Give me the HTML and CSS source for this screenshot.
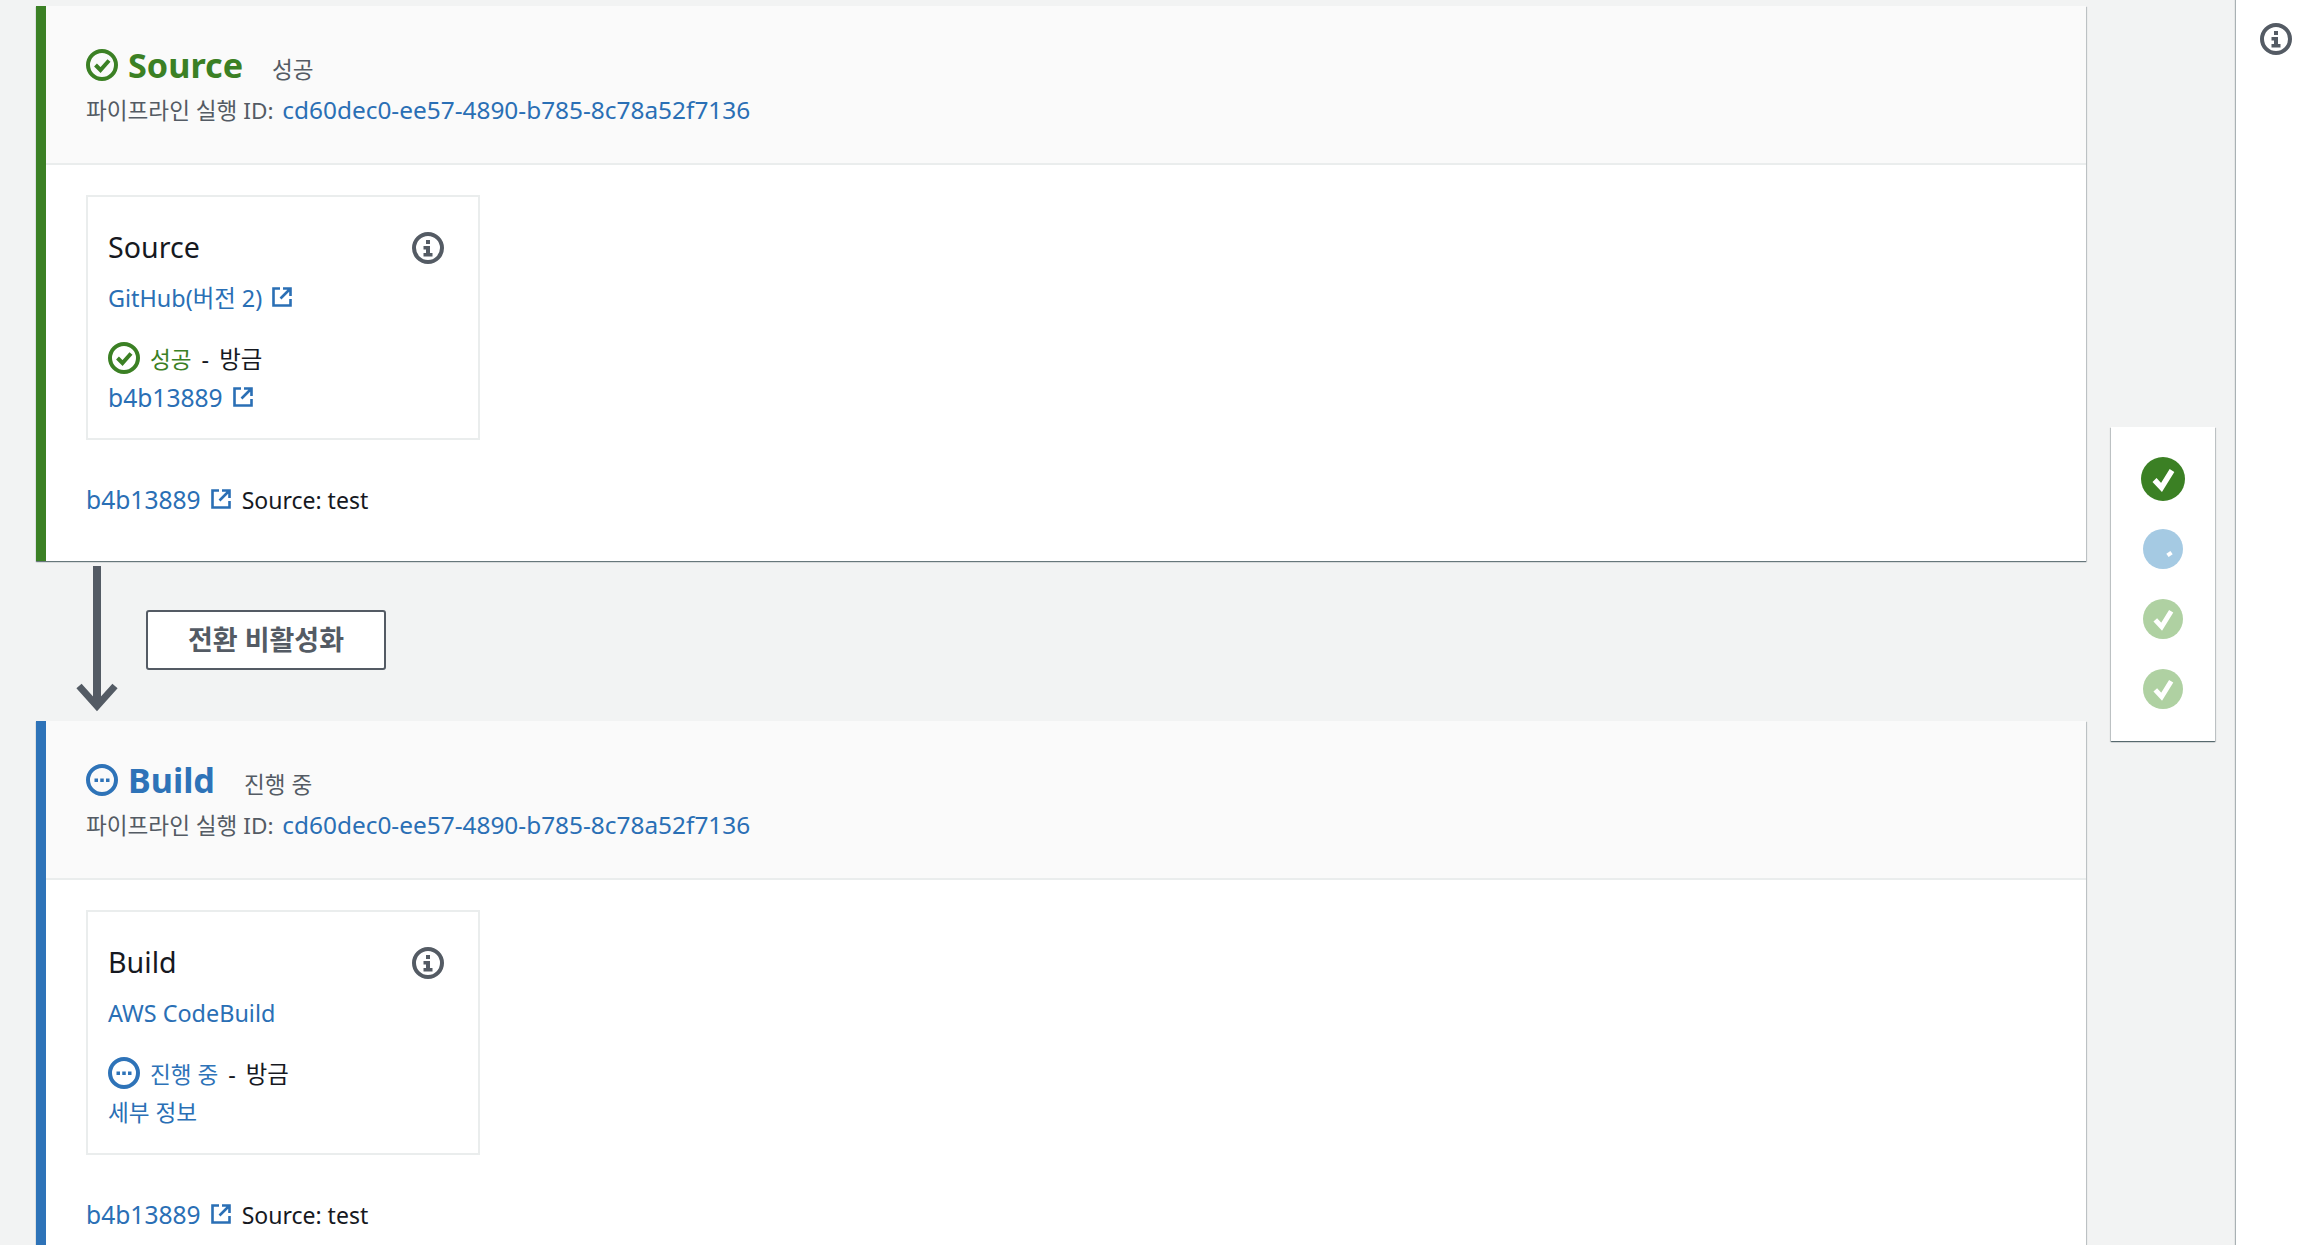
FILE: index.html
```html
<!DOCTYPE html>
<html lang="ko">
<head>
    <meta charset="UTF-8">
    <title>CodePipeline</title>
    <link rel="stylesheet" href="styles.css">
</head>
<body>
    <svg class="defs" width="0" height="0">
        <symbol id="i-ok" viewBox="0 0 32 32">
            <circle cx="16" cy="16" r="14" fill="none" stroke="currentColor" stroke-width="4"/>
            <path d="M9.500 16l5 5 8.500-9.500" fill="none" stroke="currentColor" stroke-width="4"/>
        </symbol>
        <symbol id="i-progress" viewBox="0 0 32 32">
            <circle cx="16" cy="16" r="14" fill="none" stroke="currentColor" stroke-width="4"/>
            <path d="M8.500 14.500h3.500v3.500h-3.500zM14.250 14.500h3.500v3.500h-3.500zM20 14.500h3.500v3.500h-3.500z" fill="currentColor"/>
        </symbol>
        <symbol id="i-info" viewBox="0 0 32 32">
            <circle cx="16" cy="16" r="14" fill="none" stroke="currentColor" stroke-width="4"/>
            <path d="M14 8h4v4h-4zM11.500 14h6.500v7h2.500v3.500h-9V21H14v-3.500h-2.500z" fill="currentColor"/>
        </symbol>
        <symbol id="i-ext" viewBox="0 0 20 20">
            <path d="M8 1.500H1.500v17h17V12M11 1.500h7.500V9M18 2L8.500 11.500" fill="none" stroke="currentColor" stroke-width="2.600"/>
        </symbol>
        <symbol id="i-check" viewBox="0 0 44 44">
            <path d="M13.500 23l7 7.500L31 13.500" fill="none" stroke="#fff" stroke-width="5.500"/>
        </symbol>
    </svg>

    <div class="page">
        <main class="pipeline">
            <section class="stage stage-ok">
                <header class="stage-head">
                    <div class="stage-title">
                        <svg class="stage-icon"><use href="#i-ok"/></svg>
                        <h2>Source</h2>
                        <span class="stage-state">성공</span>
                    </div>
                    <p class="exec-id">파이프라인 실행 ID: <a href="#">cd60dec0-ee57-4890-b785-8c78a52f7136</a></p>
                </header>
                <div class="stage-body">
                    <div class="action">
                        <div class="action-top">
                            <h3>Source</h3>
                            <svg class="info-icon"><use href="#i-info"/></svg>
                        </div>
                        <a class="provider" href="#">GitHub(버전 2)<svg class="ext"><use href="#i-ext"/></svg></a>
                        <div class="action-status">
                            <svg class="status-icon ok"><use href="#i-ok"/></svg>
                            <span class="ok">성공</span>
                            <span class="when">- 방금</span>
                        </div>
                        <a class="detail detail-rev" href="#">b4b13889<svg class="ext"><use href="#i-ext"/></svg></a>
                    </div>
                    <p class="revision"><a href="#">b4b13889<svg class="ext"><use href="#i-ext"/></svg></a> Source: test</p>
                </div>
            </section>

            <div class="transition">
                <div class="arrow">
                    <svg width="42" height="146" viewBox="0 0 42 146">
                        <path d="M17 0h8v139h-8z" fill="#545b64"/>
                        <path d="M3 120l18 20 18-20" fill="none" stroke="#545b64" stroke-width="7"/>
                    </svg>
                </div>
                <button class="toggle">전환 비활성화</button>
            </div>

            <section class="stage stage-progress">
                <header class="stage-head">
                    <div class="stage-title">
                        <svg class="stage-icon"><use href="#i-progress"/></svg>
                        <h2>Build</h2>
                        <span class="stage-state">진행 중</span>
                    </div>
                    <p class="exec-id">파이프라인 실행 ID: <a href="#">cd60dec0-ee57-4890-b785-8c78a52f7136</a></p>
                </header>
                <div class="stage-body">
                    <div class="action">
                        <div class="action-top">
                            <h3>Build</h3>
                            <svg class="info-icon"><use href="#i-info"/></svg>
                        </div>
                        <a class="provider" href="#">AWS CodeBuild</a>
                        <div class="action-status">
                            <svg class="status-icon progress"><use href="#i-progress"/></svg>
                            <span class="progress">진행 중</span>
                            <span class="when">- 방금</span>
                        </div>
                        <a class="detail" href="#">세부 정보</a>
                    </div>
                    <p class="revision"><a href="#">b4b13889<svg class="ext"><use href="#i-ext"/></svg></a> Source: test</p>
                </div>
            </section>
        </main>

        <aside class="minimap">
            <span class="dot dot-current"><svg><use href="#i-check"/></svg></span>
            <span class="dot dot-blue"><i></i></span>
            <span class="dot dot-green"><svg><use href="#i-check"/></svg></span>
            <span class="dot dot-green"><svg><use href="#i-check"/></svg></span>
        </aside>

        <aside class="side-panel">
            <svg class="info-icon"><use href="#i-info"/></svg>
        </aside>
    </div>
</body>
</html>
```

FILE: styles.css
```css
* {
    box-sizing: border-box;
}
html, body {
    margin: 0;
    height: 100%;
    overflow: hidden;
}
body {
    font-family: "Noto Sans", "Noto Sans CJK KR", sans-serif;
    font-size: 23.4px;
    color: #16191f;
    background-color: #f2f3f3;
}
a {
    color: #2a6fb5;
    text-decoration: none;
}
.defs {
    position: absolute;
}
.page {
    display: flex;
    height: 100%;
}
.pipeline {
    width: 2050px;
    margin-left: 36px;
    padding-top: 6px;
    flex: none;
}
.stage {
    background-color: #fff;
    border-left: 10px solid;
    box-shadow: 0 1px 1px rgba(0,28,36,0.5), 1px 1px 1px rgba(0,28,36,0.15);
}
.stage-ok {
    border-color: #3b8024;
    height: 555px;
}
.stage-progress {
    border-color: #2e73b8;
    height: 525px;
}
.stage-head {
    height: 159px;
    padding: 34px 40px 0;
    background-color: #fafafa;
    border-bottom: 2px solid #eaeded;
}
.stage-title {
    display: flex;
    align-items: center;
    height: 50px;
}
.stage-icon {
    width: 32px;
    height: 32px;
    margin-right: 10px;
}
.stage-ok .stage-title {
    color: #3b8024;
}
.stage-progress .stage-title {
    color: #2e73b8;
}
.stage-title h2 {
    margin: 0;
    font-size: 34.2px;
    font-weight: 700;
    line-height: 50px;
}
.stage-state {
    margin: 6px 0 0 29px;
    font-size: 22.6px;
    color: #545b64;
}
.exec-id {
    margin: 2px 0 0;
    font-size: 22.6px;
    color: #545b64;
    line-height: 36px;
}
.exec-id a {
    margin-left: 3px;
    font-size: 24.4px;
}
.stage-body {
    padding: 30px 40px 0;
}
.action {
    width: 394px;
    height: 245px;
    padding: 27px 20px 0;
    background-color: #fff;
    border: 2px solid #eaeded;
}
.action-top {
    display: flex;
    justify-content: space-between;
    align-items: center;
    padding-right: 14px;
    height: 44px;
}
.action-top h3 {
    margin: 0;
    font-size: 28.6px;
    font-weight: 400;
}
.action-top .info-icon {
    position: relative;
    top: 2px;
}
.info-icon {
    width: 32px;
    height: 32px;
    color: #545b64;
}
.provider {
    display: block;
    margin-top: 10px;
    line-height: 40px;
}
.ext {
    width: 20px;
    height: 20px;
    margin-left: 10px;
}
.action-status {
    display: flex;
    align-items: center;
    margin-top: 20px;
    height: 40px;
}
.status-icon {
    width: 32px;
    height: 32px;
    margin-right: 10px;
}
.ok {
    color: #3b8024;
}
.progress {
    color: #2e73b8;
}
.action-status .ok, .action-status .progress {
    font-size: 22.6px;
}
.when {
    margin-left: 10px;
    word-spacing: 4px;
}
.detail {
    display: block;
    font-size: 22.6px;
    line-height: 40px;
}
.detail-rev {
    font-size: 24.6px;
}
.revision {
    margin: 40px 0 0;
    font-size: 23px;
    line-height: 40px;
}
.revision a {
    margin-right: 5px;
    font-size: 24.6px;
}
.transition {
    display: flex;
    height: 160px;
}
.arrow {
    width: 110px;
    padding: 5px 0 0 40px;
}
.toggle {
    width: 240px;
    height: 60px;
    margin-top: 49px;
    padding-bottom: 4px;
    font: 700 27px "Noto Sans", "Noto Sans CJK KR", sans-serif;
    color: #545b64;
    background-color: #fff;
    border: 2px solid #545b64;
    border-radius: 3px;
}
.minimap {
    flex: none;
    width: 104px;
    height: 314px;
    margin: 427px 0 0 25px;
    padding-top: 30px;
    display: flex;
    flex-direction: column;
    align-items: center;
    gap: 30px;
    background-color: #fff;
    box-shadow: 0 1px 1px rgba(0,28,36,0.5), 1px 1px 1px rgba(0,28,36,0.15), -1px 1px 1px rgba(0,28,36,0.15);
}
.dot {
    position: relative;
    display: block;
    width: 40px;
    height: 40px;
    border-radius: 50%;
}
.dot svg {
    display: block;
    width: 40px;
    height: 40px;
}
.dot-current {
    width: 44px;
    height: 44px;
    margin-bottom: -2px;
    background-color: #3b8024;
}
.dot-current svg {
    width: 44px;
    height: 44px;
}
.dot-blue {
    background-color: #a5cae3;
}
.dot-blue i {
    position: absolute;
    left: 24px;
    top: 23px;
    width: 5px;
    height: 4px;
    background-color: #fff;
    transform: rotate(-35deg);
}
.dot-green {
    background-color: #afd1a2;
}
.side-panel {
    flex: none;
    width: 71px;
    margin-left: 21px;
    padding: 23px 0 0 24px;
    background-color: #fff;
    box-shadow: -1px 0 1px rgba(0,28,36,0.3);
}
```
